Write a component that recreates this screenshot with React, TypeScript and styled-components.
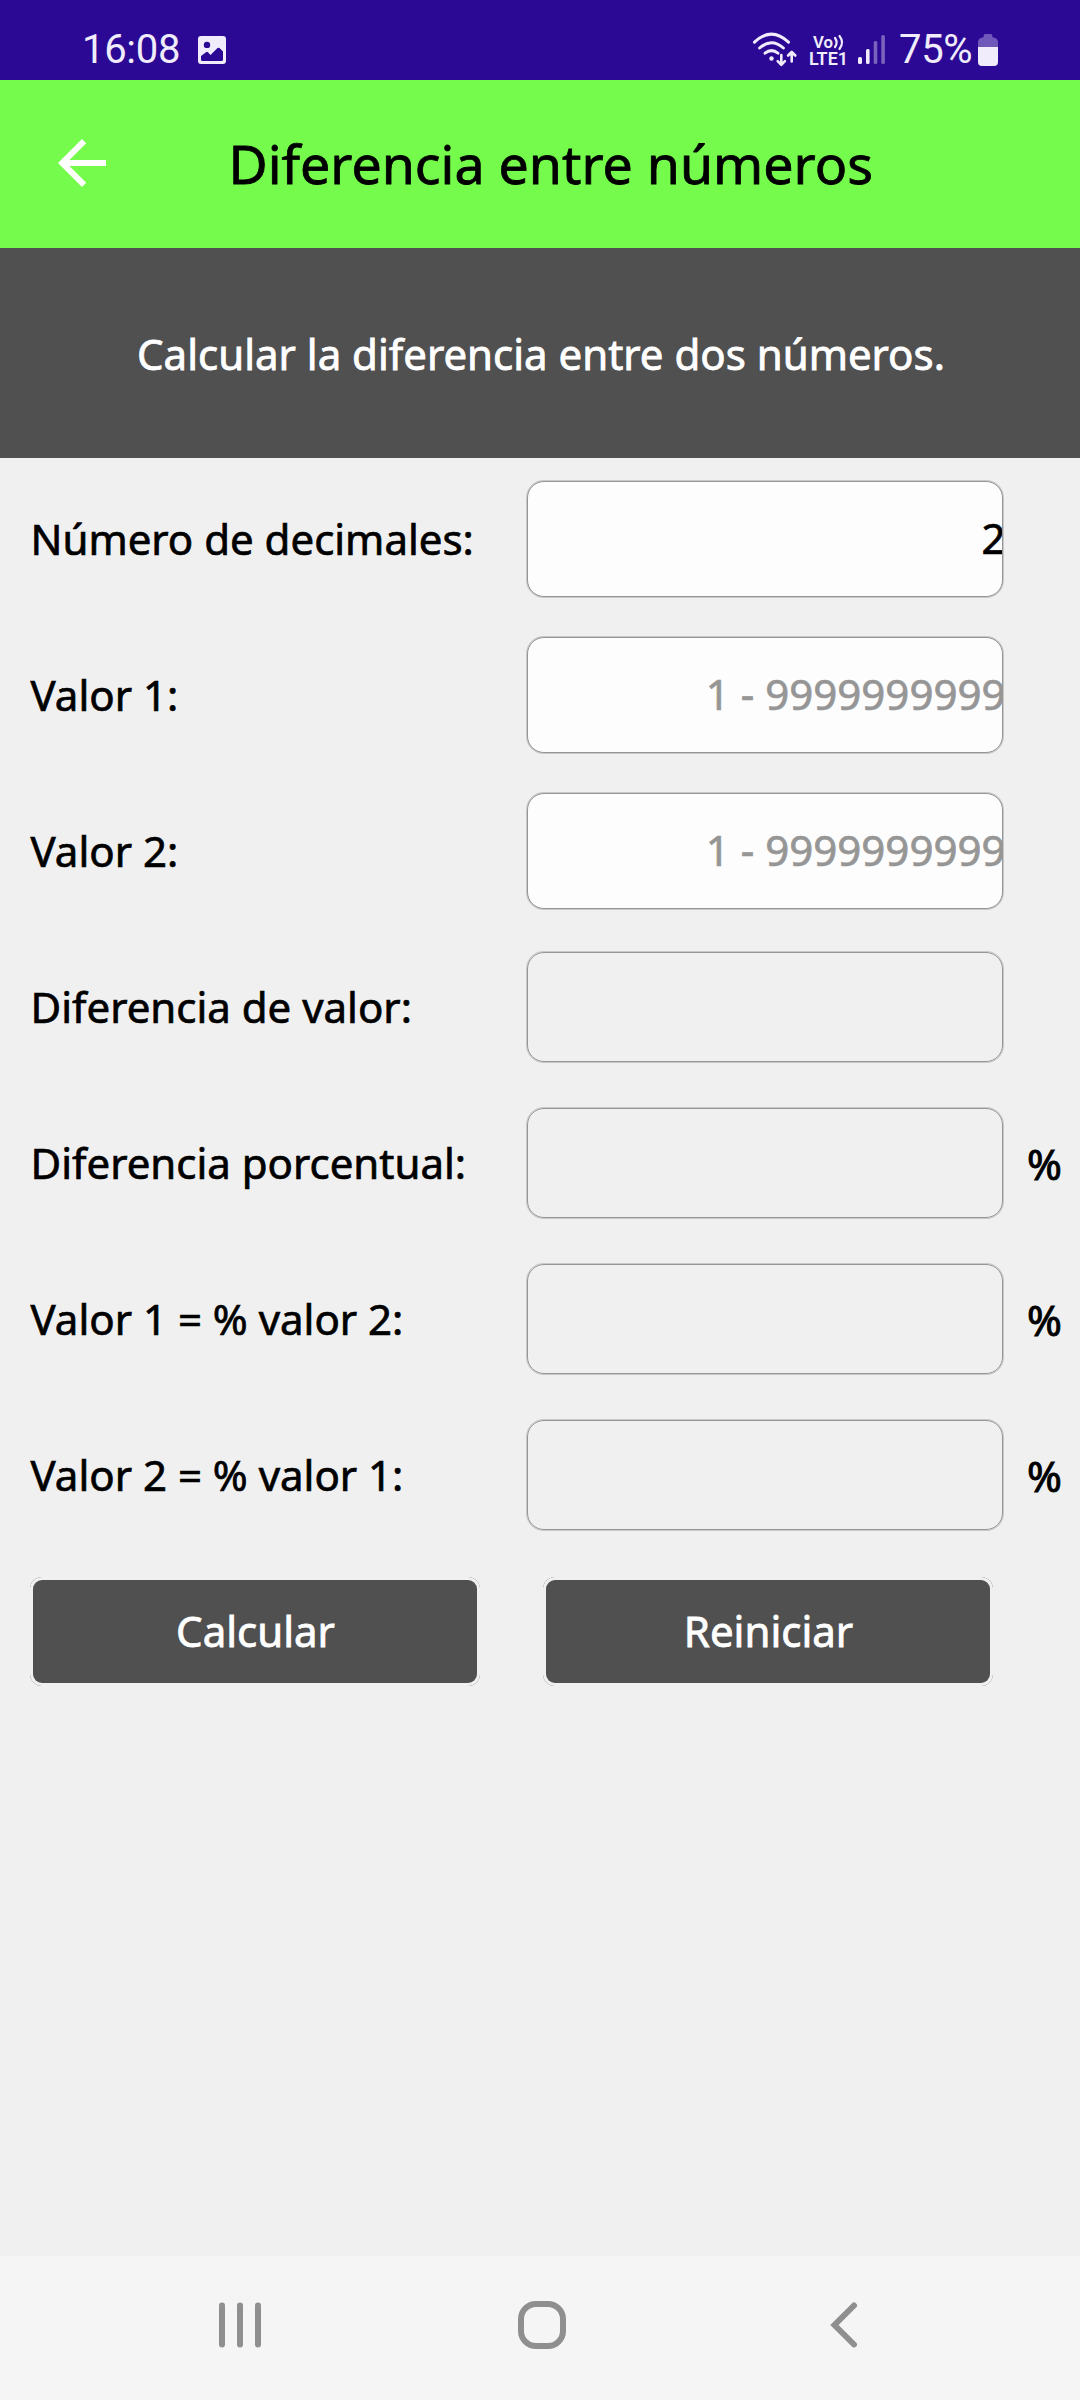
import React from "react";
import styled, { createGlobalStyle } from "styled-components";

const GlobalStyle = createGlobalStyle`
  html, body { margin: 0; padding: 0; background: #f0f0f0; }
  * { box-sizing: border-box; }
`;

const Screen = styled.div`
  width: 1080px;
  height: 2400px;
  display: flex;
  flex-direction: column;
  background: #f0f0f0;
  color: #000;
  font-family: "Noto Sans", "Open Sans", sans-serif;
  font-size: 42px;
  overflow: hidden;
`;

const StatusBar = styled.div`
  height: 80px;
  flex: none;
  display: flex;
  align-items: flex-start;
  justify-content: space-between;
  padding: 25px 82px 0 82px;
  background: #2b0995;
  color: #f0ecfb;
  font-family: Roboto, sans-serif;
  font-size: 40px;
  line-height: 49px;
`;

const StatusGroup = styled.div`
  display: flex;
  align-items: flex-start;
`;

const Clock = styled.span`
  width: 116px;
  letter-spacing: -0.3px;
`;

const Percent = styled.span`
  width: 79px;
  letter-spacing: -0.3px;
`;

const StatusIcon = styled.svg<{ $top: number; $right?: number }>`
  display: block;
  flex: none;
  margin-top: ${(p) => p.$top}px;
  margin-right: ${(p) => p.$right ?? 0}px;
  overflow: visible;
`;

const Header = styled.header`
  height: 168px;
  flex: none;
  display: flex;
  align-items: center;
  padding: 0 0 2px 46px;
  background: #75fb4c;
`;

const BackButton = styled.button`
  width: 72px;
  height: 72px;
  padding: 0;
  border: 0;
  background: none;
`;

const Title = styled.h1`
  margin: 1px 0 0 110.5px;
  font-size: 53.7px;
  font-weight: 400;
  line-height: 74px;
  white-space: nowrap;
  -webkit-text-stroke: 0.8px #000;
`;

const Banner = styled.p`
  height: 210px;
  flex: none;
  margin: 0;
  padding: 0 0 0 2px;
  display: flex;
  align-items: center;
  justify-content: center;
  background: #505050;
  color: #fff;
  white-space: nowrap;
  -webkit-text-stroke: 0.8px #fff;
`;

const Form = styled.main`
  flex: 1;
  display: flex;
  flex-direction: column;
  padding: 3px 0 0 30px;
`;

const Row = styled.div`
  height: 156px;
  flex: none;
  display: flex;
  align-items: center;
`;

const Label = styled.label`
  width: 497px;
  flex: none;
  padding: 0 0 2px 0.5px;
  white-space: nowrap;
  -webkit-text-stroke: 0.7px #000;
`;

const Field = styled.div<{ $editable?: boolean; $muted?: boolean }>`
  width: 476px;
  height: ${(p) => (p.$editable ? 116 : 110)}px;
  flex: none;
  display: flex;
  align-items: center;
  justify-content: flex-end;
  border: 1px solid #969696;
  border-radius: 17px;
  box-shadow: 0 0 0 1px rgba(150, 150, 150, 0.45);
  background: ${(p) => (p.$editable ? "#fdfdfd" : "transparent")};
  color: ${(p) => (p.$muted ? "#969696" : "#000")};
  -webkit-text-stroke: 0.7px ${(p) => (p.$muted ? "#969696" : "#000")};
  overflow: hidden;
  white-space: nowrap;
`;

const FieldText = styled.span`
  margin: 0 -3.5px 4px 0;
`;

const Unit = styled.span`
  margin: 0 0 0 24px;
  -webkit-text-stroke: 0.9px #000;
`;

const Actions = styled(Row)`
  gap: 63px;
`;

const ButtonRim = styled.div`
  width: 450px;
  height: 109px;
  display: flex;
  border-radius: 12px;
  background: #505050;
`;

const ButtonGap = styled.div`
  flex: 1;
  display: flex;
  padding: 3px;
  border-radius: 12px;
  background: #f0f0f0;
`;

const ButtonFace = styled.button`
  flex: 1;
  padding: 0 0 1px 1px;
  border: 0;
  border-radius: 9px;
  background: #505050;
  color: #fff;
  font: inherit;
  -webkit-text-stroke: 0.8px #fff;
`;

const NavBar = styled.nav`
  height: 144px;
  flex: none;
  display: flex;
  align-items: flex-start;
  justify-content: space-between;
  padding: 39px 207px 0 210px;
  background: #f5f5f5;
`;

const rows = [
  { label: "Número de decimales:", editable: true, value: "2" },
  { label: "Valor 1:", editable: true, hint: "1 - 9999999999" },
  { label: "Valor 2:", editable: true, hint: "1 - 9999999999" },
  { label: "Diferencia de valor:" },
  { label: "Diferencia porcentual:", unit: "%" },
  { label: "Valor 1 = % valor 2:", unit: "%" },
  { label: "Valor 2 = % valor 1:", unit: "%" },
];

function PictureIcon() {
  return (
    <StatusIcon $top={11} width="28" height="28" viewBox="0 0 28 28">
      <path
        fill="#f0ecfb"
        fillRule="evenodd"
        d="M3 0H25Q28 0 28 3V25Q28 28 25 28H3Q0 28 0 25V3Q0 0 3 0ZM9 5.7A3.2 3.2 0 1 0 9 12.1A3.2 3.2 0 1 0 9 5.7ZM3 20V23.500Q3 25 4.500 25H23.500Q25 25 25 23.500V15.500L21.500 12Q20.500 11.500 19.500 12L12.500 19L10 16.200Q9 15.500 8 16.200Z"
      />
    </StatusIcon>
  );
}

function WifiIcon() {
  return (
    <StatusIcon $top={6} $right={12} width="46" height="36" viewBox="0 0 46 36">
      <g fill="none" stroke="#f0ecfb" strokeWidth="3" strokeLinecap="round">
        <path d="M3.500 11.200Q20.500 -5 37.500 11.200" />
        <path d="M8.600 17Q20.500 6.500 32.400 17" />
        <path d="M14 22.200Q20.500 17 27 22.200" />
      </g>
      <circle cx="20.500" cy="27.500" r="2.200" fill="#f0ecfb" />
      <g fill="none" stroke="#f0ecfb" strokeWidth="2.600" strokeLinecap="round" strokeLinejoin="round">
        <path d="M30.300 24V33M26.700 30.200L30.300 33.800L33.900 30.200" />
        <path d="M40.700 30.500V21.500M37.100 24.500L40.700 20.900L44.300 24.500" />
      </g>
    </StatusIcon>
  );
}

function VolteIcon() {
  return (
    <StatusIcon $top={8} $right={9} width="40" height="34" viewBox="0 0 40 34">
      <g fill="#f0ecfb" fontFamily="Roboto, sans-serif" fontWeight="600">
        <text x="4" y="14.500" fontSize="17" textLength="20" lengthAdjust="spacingAndGlyphs">Vo</text>
        <text x="0" y="32" fontSize="18" textLength="39" lengthAdjust="spacingAndGlyphs">LTE1</text>
      </g>
      <g fill="none" stroke="#f0ecfb" strokeWidth="2.200" strokeLinecap="round">
        <path d="M26 5Q29.300 9.500 26 14" />
        <path d="M30.500 3Q35.500 9.500 30.500 16" />
      </g>
    </StatusIcon>
  );
}

function SignalIcon() {
  return (
    <StatusIcon $top={9} $right={13} width="28" height="31" viewBox="0 0 28 31">
      <g fill="#f0ecfb">
        <rect x="0" y="23" width="4" height="7" rx="1.500" />
        <rect x="8" y="15" width="3.600" height="15" rx="1.500" />
        <rect x="15.700" y="7" width="3.600" height="23" rx="1.500" opacity="0.400" />
        <rect x="23.300" y="1" width="3.600" height="29" rx="1.500" opacity="0.400" />
      </g>
    </StatusIcon>
  );
}

function BatteryIcon() {
  return (
    <StatusIcon $top={9} width="20" height="32" viewBox="0 0 20 32">
      <path fill="#6f58ba" d="M7 0H13Q14.500 0 14.500 3.500H16Q20 4.500 20 8V13H0V8Q0 4.500 4 3.500H5.500Q5.500 0 7 0Z" />
      <path fill="#f0ecfb" d="M0 13H20V28Q20 32 16 32H4Q0 32 0 28Z" />
    </StatusIcon>
  );
}

export default function App() {
  return (
    <Screen>
      <GlobalStyle />
      <StatusBar>
        <StatusGroup>
          <Clock>16:08</Clock>
          <PictureIcon />
        </StatusGroup>
        <StatusGroup>
          <WifiIcon />
          <VolteIcon />
          <SignalIcon />
          <Percent>75%</Percent>
          <BatteryIcon />
        </StatusGroup>
      </StatusBar>

      <Header>
        <BackButton aria-label="Atrás">
          <svg width="72" height="72" viewBox="0 0 24 24" fill="#fff">
            <path d="M20 11H7.830l5.590-5.590L12 4l-8 8 8 8 1.410-1.410L7.830 13H20v-2z" />
          </svg>
        </BackButton>
        <Title>Diferencia entre números</Title>
      </Header>

      <Banner>Calcular la diferencia entre dos números.</Banner>

      <Form>
        {rows.map((row) => (
          <Row key={row.label}>
            <Label>{row.label}</Label>
            <Field $editable={row.editable} $muted={!!row.hint}>
              <FieldText>{row.value ?? row.hint}</FieldText>
            </Field>
            {row.unit && <Unit>{row.unit}</Unit>}
          </Row>
        ))}
        <Actions>
          {["Calcular", "Reiniciar"].map((name) => (
            <ButtonRim key={name}>
              <ButtonGap>
                <ButtonFace>{name}</ButtonFace>
              </ButtonGap>
            </ButtonRim>
          ))}
        </Actions>
      </Form>

      <NavBar>
        <svg width="60" height="60" viewBox="0 0 60 60" stroke="#8f8f8f" strokeWidth="6" strokeLinecap="round">
          <path d="M12 10.500V49.500M30 10.500V49.500M48 10.500V49.500" />
        </svg>
        <svg width="60" height="60" viewBox="0 0 60 60" fill="none" stroke="#8f8f8f" strokeWidth="6">
          <rect x="9" y="9" width="42" height="42" rx="15" />
        </svg>
        <svg width="60" height="60" viewBox="0 0 60 60" fill="none" stroke="#8f8f8f" strokeWidth="6" strokeLinecap="round">
          <path d="M41 10.500L21.500 30L41 49.500" />
        </svg>
      </NavBar>
    </Screen>
  );
}
